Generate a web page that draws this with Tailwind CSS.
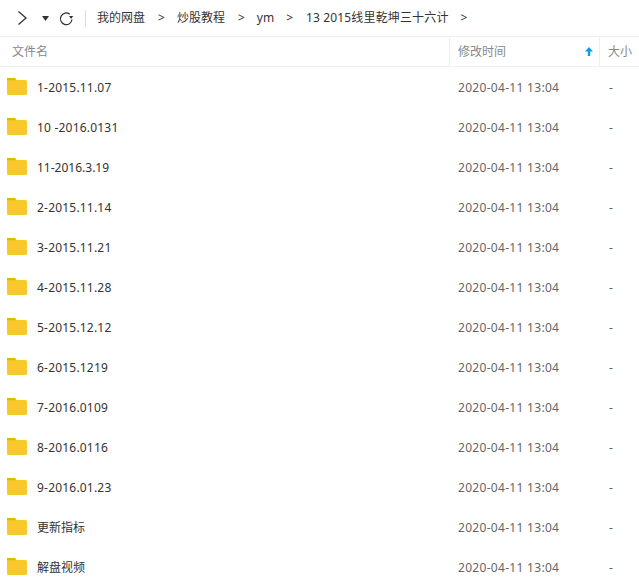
<!DOCTYPE html>
<html><head><meta charset="utf-8"><script src="https://cdn.jsdelivr.net/npm/@tailwindcss/browser@4"></script></head>
<body class="bg-white overflow-hidden">
<div class="w-[639px] h-[583px] overflow-hidden font-['Noto_Sans','Noto_Sans_CJK_SC',sans-serif] text-[12px] leading-[16px]">
  <div class="h-[37px] flex items-center border-b border-[#eeeeee] text-[#333333]">
    <svg class="ml-[17px] w-[11px] h-[16px]" viewBox="0 0 11 16" fill="none" stroke="#333" stroke-width="1.3"><path d="M1.500 1.500 9 8l-7.500 6.500"/></svg>
    <svg class="ml-[14px] w-[7px] h-[5px]" viewBox="0 0 7 5" fill="#333"><path d="M0 0h7L3.500 5z"/></svg>
    <svg class="ml-[10px] w-[15px] h-[15px]" viewBox="0 0 15 15" fill="none" stroke="#333" stroke-width="1.200"><path d="M10.800 3.200A5.800 5.800 0 1 0 13 8.500"/><path d="M10 5h4.200l-2.100 3z" fill="#333" stroke="none"/></svg>
    <div class="ml-[11px] w-px h-[17px] bg-[#dddddd]"></div>
    <div class="ml-[11px] flex items-center">
      <span>我的网盘</span><span class="ml-[13px]">&gt;</span><span class="ml-[12px]">炒股教程</span><span class="ml-[13px]">&gt;</span><span class="ml-[12px]">ym</span><span class="ml-[12px]">&gt;</span><span class="ml-[13px] tracking-[0.15px]">13 2015线里乾坤三十六计</span><span class="ml-[12px]">&gt;</span>
    </div>
  </div>
  <div class="h-[30px] flex items-center border-b border-[#f2f2f2] text-[#888888]">
    <div class="w-[450px] h-full flex items-center pl-[12px] border-r border-[#eeeeee]">文件名</div>
    <div class="w-[150px] h-full flex items-center justify-between pl-[8px] pr-[6px] border-r border-[#eeeeee]">
      <span>修改时间</span>
      <svg class="w-[8px] h-[9px]" viewBox="0 0 8 9" fill="#0a9cf5"><path d="M4 0 8 4.500H5.200V9H2.800V4.500H0z"/></svg>
    </div>
    <div class="pl-[8px]">大小</div>
  </div>
  <div>
    <div class="h-[40px] flex items-center"><div class="w-[450px] flex items-center pl-[7px] text-[#333333]"><svg class="w-[20px] h-[17px] mb-[2px]" viewBox="0 0 20 17"><path d="M1.500 2h17A1.500 1.500 0 0 1 20 3.500v12a1.500 1.500 0 0 1-1.500 1.500h-17A1.500 1.500 0 0 1 0 15.500V1a1 1 0 0 1 1-1z" fill="#f9c92b"/><path d="M1 0h7L10 2.200H0V1a1 1 0 0 1 1-1z" fill="#e6b50c"/></svg><span class="ml-[10px] mt-[2px] tracking-[0.2px]">1-2015.11.07</span></div><div class="w-[150px] pl-[8px] mt-[2px] tracking-[0.3px] text-[#666666]">2020-04-11 13:04</div><div class="pl-[9px] mt-[2px] text-[#666666]">-</div></div>
    <div class="h-[40px] flex items-center"><div class="w-[450px] flex items-center pl-[7px] text-[#333333]"><svg class="w-[20px] h-[17px] mb-[2px]" viewBox="0 0 20 17"><path d="M1.500 2h17A1.500 1.500 0 0 1 20 3.500v12a1.500 1.500 0 0 1-1.500 1.500h-17A1.500 1.500 0 0 1 0 15.500V1a1 1 0 0 1 1-1z" fill="#f9c92b"/><path d="M1 0h7L10 2.200H0V1a1 1 0 0 1 1-1z" fill="#e6b50c"/></svg><span class="ml-[10px] mt-[2px] tracking-[0.2px]">10 -2016.0131</span></div><div class="w-[150px] pl-[8px] mt-[2px] tracking-[0.3px] text-[#666666]">2020-04-11 13:04</div><div class="pl-[9px] mt-[2px] text-[#666666]">-</div></div>
    <div class="h-[40px] flex items-center"><div class="w-[450px] flex items-center pl-[7px] text-[#333333]"><svg class="w-[20px] h-[17px] mb-[2px]" viewBox="0 0 20 17"><path d="M1.500 2h17A1.500 1.500 0 0 1 20 3.500v12a1.500 1.500 0 0 1-1.500 1.500h-17A1.500 1.500 0 0 1 0 15.500V1a1 1 0 0 1 1-1z" fill="#f9c92b"/><path d="M1 0h7L10 2.200H0V1a1 1 0 0 1 1-1z" fill="#e6b50c"/></svg><span class="ml-[10px] mt-[2px]">11-2016.3.19</span></div><div class="w-[150px] pl-[8px] mt-[2px] tracking-[0.3px] text-[#666666]">2020-04-11 13:04</div><div class="pl-[9px] mt-[2px] text-[#666666]">-</div></div>
    <div class="h-[40px] flex items-center"><div class="w-[450px] flex items-center pl-[7px] text-[#333333]"><svg class="w-[20px] h-[17px] mb-[2px]" viewBox="0 0 20 17"><path d="M1.500 2h17A1.500 1.500 0 0 1 20 3.500v12a1.500 1.500 0 0 1-1.500 1.500h-17A1.500 1.500 0 0 1 0 15.500V1a1 1 0 0 1 1-1z" fill="#f9c92b"/><path d="M1 0h7L10 2.200H0V1a1 1 0 0 1 1-1z" fill="#e6b50c"/></svg><span class="ml-[10px] mt-[2px] tracking-[0.2px]">2-2015.11.14</span></div><div class="w-[150px] pl-[8px] mt-[2px] tracking-[0.3px] text-[#666666]">2020-04-11 13:04</div><div class="pl-[9px] mt-[2px] text-[#666666]">-</div></div>
    <div class="h-[40px] flex items-center"><div class="w-[450px] flex items-center pl-[7px] text-[#333333]"><svg class="w-[20px] h-[17px] mb-[2px]" viewBox="0 0 20 17"><path d="M1.500 2h17A1.500 1.500 0 0 1 20 3.500v12a1.500 1.500 0 0 1-1.500 1.500h-17A1.500 1.500 0 0 1 0 15.500V1a1 1 0 0 1 1-1z" fill="#f9c92b"/><path d="M1 0h7L10 2.200H0V1a1 1 0 0 1 1-1z" fill="#e6b50c"/></svg><span class="ml-[10px] mt-[2px] tracking-[0.2px]">3-2015.11.21</span></div><div class="w-[150px] pl-[8px] mt-[2px] tracking-[0.3px] text-[#666666]">2020-04-11 13:04</div><div class="pl-[9px] mt-[2px] text-[#666666]">-</div></div>
    <div class="h-[40px] flex items-center"><div class="w-[450px] flex items-center pl-[7px] text-[#333333]"><svg class="w-[20px] h-[17px] mb-[2px]" viewBox="0 0 20 17"><path d="M1.500 2h17A1.500 1.500 0 0 1 20 3.500v12a1.500 1.500 0 0 1-1.500 1.500h-17A1.500 1.500 0 0 1 0 15.500V1a1 1 0 0 1 1-1z" fill="#f9c92b"/><path d="M1 0h7L10 2.200H0V1a1 1 0 0 1 1-1z" fill="#e6b50c"/></svg><span class="ml-[10px] mt-[2px] tracking-[0.2px]">4-2015.11.28</span></div><div class="w-[150px] pl-[8px] mt-[2px] tracking-[0.3px] text-[#666666]">2020-04-11 13:04</div><div class="pl-[9px] mt-[2px] text-[#666666]">-</div></div>
    <div class="h-[40px] flex items-center"><div class="w-[450px] flex items-center pl-[7px] text-[#333333]"><svg class="w-[20px] h-[17px] mb-[2px]" viewBox="0 0 20 17"><path d="M1.500 2h17A1.500 1.500 0 0 1 20 3.500v12a1.500 1.500 0 0 1-1.500 1.500h-17A1.500 1.500 0 0 1 0 15.500V1a1 1 0 0 1 1-1z" fill="#f9c92b"/><path d="M1 0h7L10 2.200H0V1a1 1 0 0 1 1-1z" fill="#e6b50c"/></svg><span class="ml-[10px] mt-[2px] tracking-[0.2px]">5-2015.12.12</span></div><div class="w-[150px] pl-[8px] mt-[2px] tracking-[0.3px] text-[#666666]">2020-04-11 13:04</div><div class="pl-[9px] mt-[2px] text-[#666666]">-</div></div>
    <div class="h-[40px] flex items-center"><div class="w-[450px] flex items-center pl-[7px] text-[#333333]"><svg class="w-[20px] h-[17px] mb-[2px]" viewBox="0 0 20 17"><path d="M1.500 2h17A1.500 1.500 0 0 1 20 3.500v12a1.500 1.500 0 0 1-1.500 1.500h-17A1.500 1.500 0 0 1 0 15.500V1a1 1 0 0 1 1-1z" fill="#f9c92b"/><path d="M1 0h7L10 2.200H0V1a1 1 0 0 1 1-1z" fill="#e6b50c"/></svg><span class="ml-[10px] mt-[2px] tracking-[0.2px]">6-2015.1219</span></div><div class="w-[150px] pl-[8px] mt-[2px] tracking-[0.3px] text-[#666666]">2020-04-11 13:04</div><div class="pl-[9px] mt-[2px] text-[#666666]">-</div></div>
    <div class="h-[40px] flex items-center"><div class="w-[450px] flex items-center pl-[7px] text-[#333333]"><svg class="w-[20px] h-[17px] mb-[2px]" viewBox="0 0 20 17"><path d="M1.500 2h17A1.500 1.500 0 0 1 20 3.500v12a1.500 1.500 0 0 1-1.500 1.500h-17A1.500 1.500 0 0 1 0 15.500V1a1 1 0 0 1 1-1z" fill="#f9c92b"/><path d="M1 0h7L10 2.200H0V1a1 1 0 0 1 1-1z" fill="#e6b50c"/></svg><span class="ml-[10px] mt-[2px] tracking-[0.2px]">7-2016.0109</span></div><div class="w-[150px] pl-[8px] mt-[2px] tracking-[0.3px] text-[#666666]">2020-04-11 13:04</div><div class="pl-[9px] mt-[2px] text-[#666666]">-</div></div>
    <div class="h-[40px] flex items-center"><div class="w-[450px] flex items-center pl-[7px] text-[#333333]"><svg class="w-[20px] h-[17px] mb-[2px]" viewBox="0 0 20 17"><path d="M1.500 2h17A1.500 1.500 0 0 1 20 3.500v12a1.500 1.500 0 0 1-1.500 1.500h-17A1.500 1.500 0 0 1 0 15.500V1a1 1 0 0 1 1-1z" fill="#f9c92b"/><path d="M1 0h7L10 2.200H0V1a1 1 0 0 1 1-1z" fill="#e6b50c"/></svg><span class="ml-[10px] mt-[2px] tracking-[0.2px]">8-2016.0116</span></div><div class="w-[150px] pl-[8px] mt-[2px] tracking-[0.3px] text-[#666666]">2020-04-11 13:04</div><div class="pl-[9px] mt-[2px] text-[#666666]">-</div></div>
    <div class="h-[40px] flex items-center"><div class="w-[450px] flex items-center pl-[7px] text-[#333333]"><svg class="w-[20px] h-[17px] mb-[2px]" viewBox="0 0 20 17"><path d="M1.500 2h17A1.500 1.500 0 0 1 20 3.500v12a1.500 1.500 0 0 1-1.500 1.500h-17A1.500 1.500 0 0 1 0 15.500V1a1 1 0 0 1 1-1z" fill="#f9c92b"/><path d="M1 0h7L10 2.200H0V1a1 1 0 0 1 1-1z" fill="#e6b50c"/></svg><span class="ml-[10px] mt-[2px] tracking-[0.2px]">9-2016.01.23</span></div><div class="w-[150px] pl-[8px] mt-[2px] tracking-[0.3px] text-[#666666]">2020-04-11 13:04</div><div class="pl-[9px] mt-[2px] text-[#666666]">-</div></div>
    <div class="h-[40px] flex items-center"><div class="w-[450px] flex items-center pl-[7px] text-[#333333]"><svg class="w-[20px] h-[17px] mb-[2px]" viewBox="0 0 20 17"><path d="M1.500 2h17A1.500 1.500 0 0 1 20 3.500v12a1.500 1.500 0 0 1-1.500 1.500h-17A1.500 1.500 0 0 1 0 15.500V1a1 1 0 0 1 1-1z" fill="#f9c92b"/><path d="M1 0h7L10 2.200H0V1a1 1 0 0 1 1-1z" fill="#e6b50c"/></svg><span class="ml-[10px] mt-[2px]">更新指标</span></div><div class="w-[150px] pl-[8px] mt-[2px] tracking-[0.3px] text-[#666666]">2020-04-11 13:04</div><div class="pl-[9px] mt-[2px] text-[#666666]">-</div></div>
    <div class="h-[40px] flex items-center"><div class="w-[450px] flex items-center pl-[7px] text-[#333333]"><svg class="w-[20px] h-[17px] mb-[2px]" viewBox="0 0 20 17"><path d="M1.500 2h17A1.500 1.500 0 0 1 20 3.500v12a1.500 1.500 0 0 1-1.500 1.500h-17A1.500 1.500 0 0 1 0 15.500V1a1 1 0 0 1 1-1z" fill="#f9c92b"/><path d="M1 0h7L10 2.200H0V1a1 1 0 0 1 1-1z" fill="#e6b50c"/></svg><span class="ml-[10px] mt-[2px]">解盘视频</span></div><div class="w-[150px] pl-[8px] mt-[2px] tracking-[0.3px] text-[#666666]">2020-04-11 13:04</div><div class="pl-[9px] mt-[2px] text-[#666666]">-</div></div>
  </div>
</div>
</body></html>
